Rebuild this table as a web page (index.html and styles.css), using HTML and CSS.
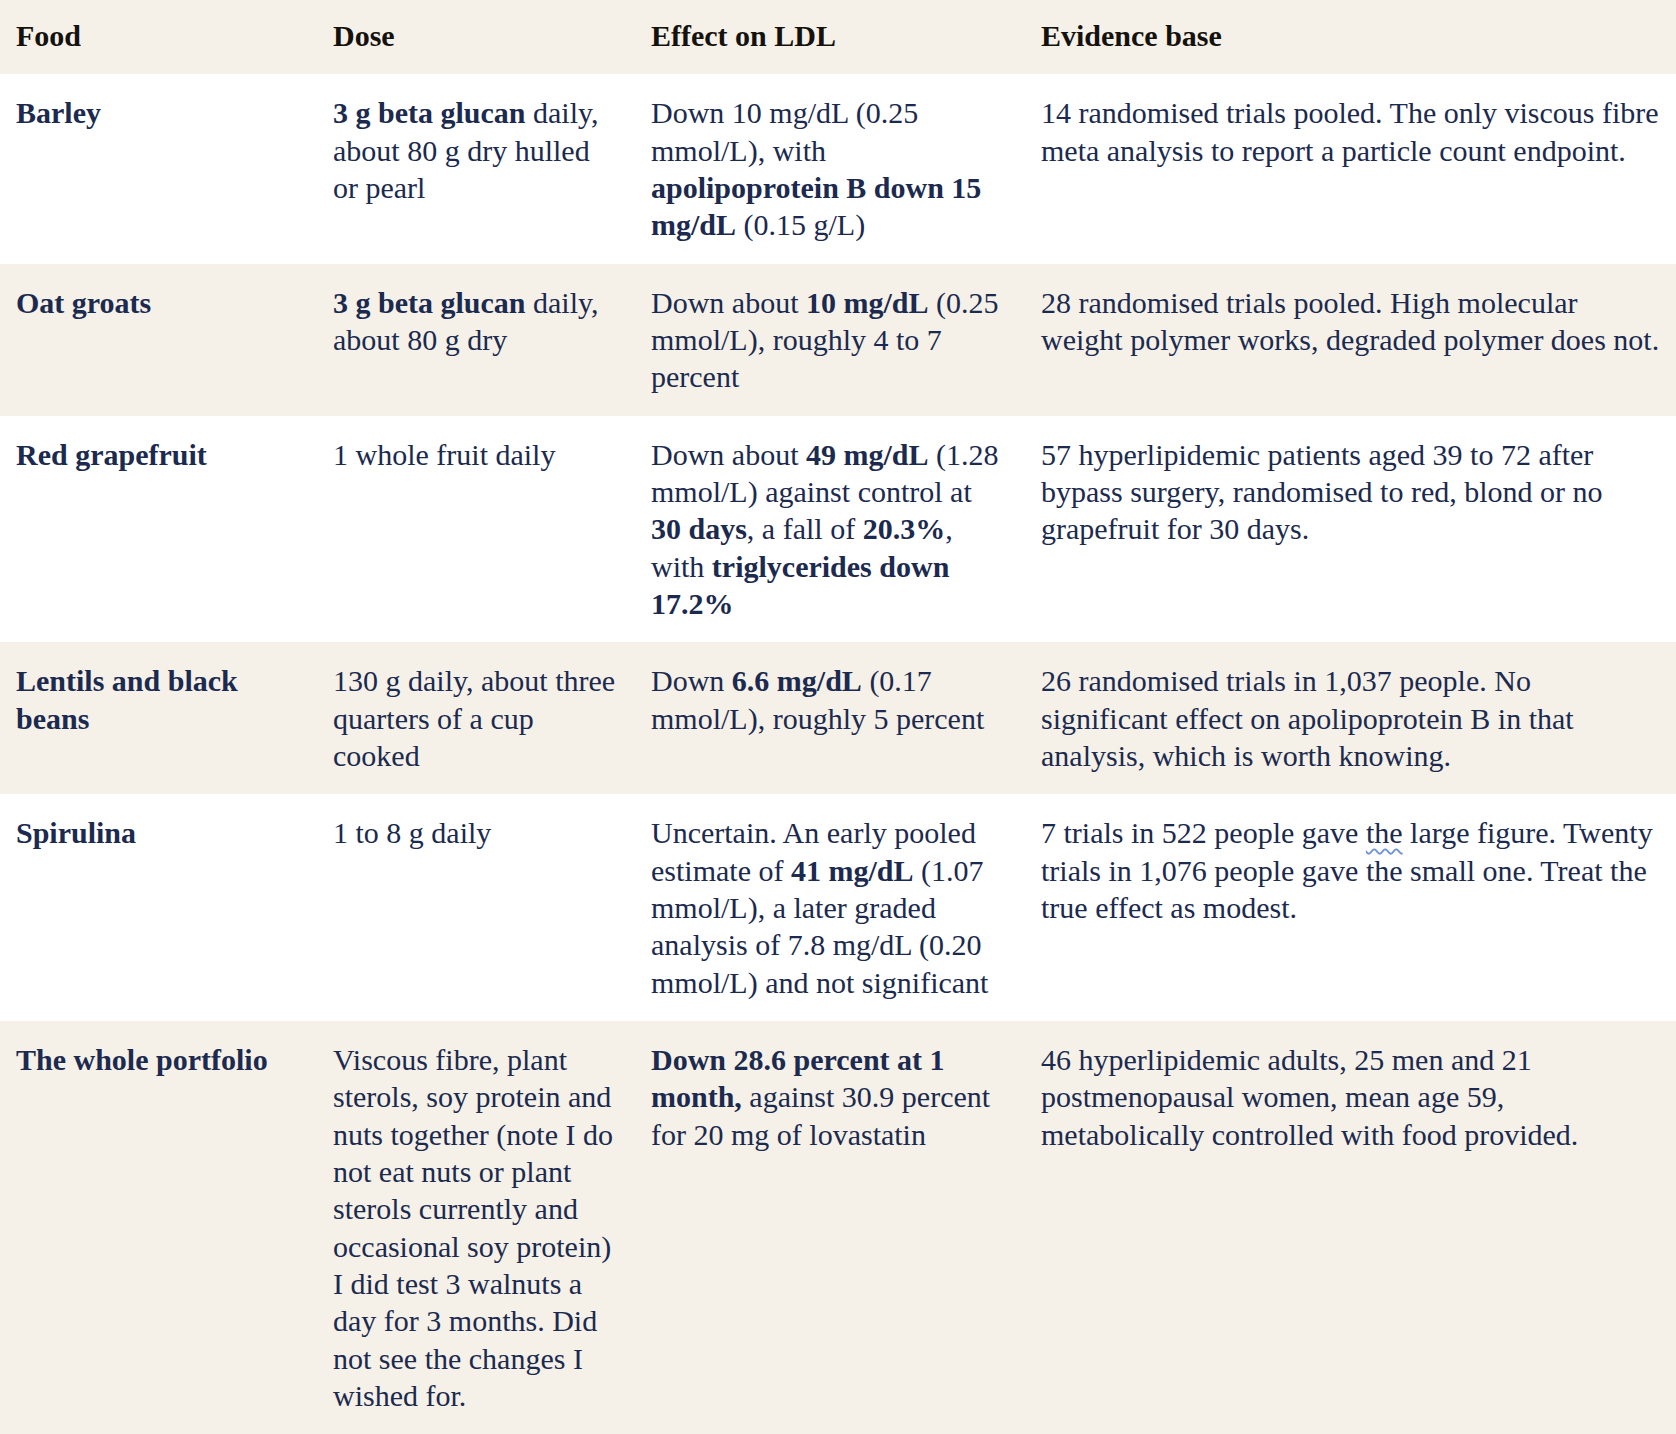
FILE: index.html
```html
<!DOCTYPE html>
<html lang="en">
<head>
<meta charset="utf-8">
<title>Foods and LDL</title>
<link rel="stylesheet" href="styles.css">
</head>
<body>
<table class="evidence">
  <colgroup>
    <col class="c-food">
    <col class="c-dose">
    <col class="c-effect">
    <col class="c-evidence">
  </colgroup>
  <thead>
    <tr>
      <th>Food</th>
      <th>Dose</th>
      <th>Effect on LDL</th>
      <th>Evidence base</th>
    </tr>
  </thead>
  <tbody>
    <tr>
      <td class="food">Barley</td>
      <td><b>3 g beta glucan</b> daily, about 80 g dry hulled or pearl</td>
      <td>Down 10 mg/dL (0.25 mmol/L), with <b>apolipoprotein B down 15 mg/dL</b> (0.15 g/L)</td>
      <td>14 randomised trials pooled. The only viscous fibre meta analysis to report a particle count endpoint.</td>
    </tr>
    <tr>
      <td class="food">Oat groats</td>
      <td><b>3 g beta glucan</b> daily, about 80 g dry</td>
      <td>Down about <b>10 mg/dL</b> (0.25 mmol/L), roughly 4 to 7 percent</td>
      <td>28 randomised trials pooled. High molecular weight polymer works, degraded polymer does not.</td>
    </tr>
    <tr>
      <td class="food">Red grapefruit</td>
      <td>1 whole fruit daily</td>
      <td>Down about <b>49 mg/dL</b> (1.28 mmol/L) against control at <b>30 days</b>, a fall of <b>20.3%</b>, with <b>triglycerides down 17.2%</b></td>
      <td>57 hyperlipidemic patients aged 39 to 72 after bypass surgery, randomised to red, blond or no grapefruit for 30 days.</td>
    </tr>
    <tr>
      <td class="food">Lentils and black beans</td>
      <td>130 g daily, about three quarters of a cup cooked</td>
      <td>Down <b>6.6 mg/dL</b> (0.17 mmol/L), roughly 5 percent</td>
      <td>26 randomised trials in 1,037 people. No significant effect on apolipoprotein B in that analysis, which is worth knowing.</td>
    </tr>
    <tr>
      <td class="food">Spirulina</td>
      <td>1 to 8 g daily</td>
      <td>Uncertain. An early pooled estimate of <b>41 mg/dL</b> (1.07 mmol/L), a later graded analysis of 7.8 mg/dL (0.20 mmol/L) and not significant</td>
      <td>7 trials in 522 people gave <span class="spell">the</span> large figure. Twenty trials in 1,076 people gave the small one. Treat the true effect as modest.</td>
    </tr>
    <tr>
      <td class="food">The whole portfolio</td>
      <td>Viscous fibre, plant sterols, soy protein and nuts together (note I do not eat nuts or plant sterols currently and occasional soy protein) I did test 3 walnuts a day for 3 months. Did not see the changes I wished for.</td>
      <td><b>Down 28.6 percent at 1 month,</b> against 30.9 percent for 20 mg of lovastatin</td>
      <td>46 hyperlipidemic adults, 25 men and 21 postmenopausal women, mean age 59, metabolically controlled with food provided.</td>
    </tr>
  </tbody>
</table>
</body>
</html>
```

FILE: styles.css
```css
html, body {
  margin: 0;
  padding: 0;
  background: #ffffff;
}

body {
  font-family: "Liberation Serif", "Times New Roman", serif;
  font-size: 30px;
  line-height: 37.33px;
  color: #1b2a4e;
}

.evidence {
  width: 1676px;
  border-collapse: collapse;
  border-spacing: 0;
  table-layout: fixed;
}

.c-food { width: 317px; }
.c-dose { width: 318px; }
.c-effect { width: 390px; }
.c-evidence { width: 651px; }

.evidence th,
.evidence td {
  text-align: left;
  vertical-align: top;
  padding: 20px 16px 20px 16px;
}

.evidence thead tr {
  background: #f5f1e8;
}

.evidence th {
  font-weight: bold;
  color: #15120e;
  padding-top: 17px;
  padding-bottom: 20px;
}

.evidence tbody tr:nth-child(odd) {
  background: #ffffff;
}

.evidence tbody tr:nth-child(even) {
  background: #f5f1e8;
}

.evidence b,
.evidence .food {
  font-weight: bold;
}

.spell {
  text-decoration: underline wavy #6f94d8;
  text-decoration-thickness: 1.5px;
  text-underline-offset: 5px;
}
```
